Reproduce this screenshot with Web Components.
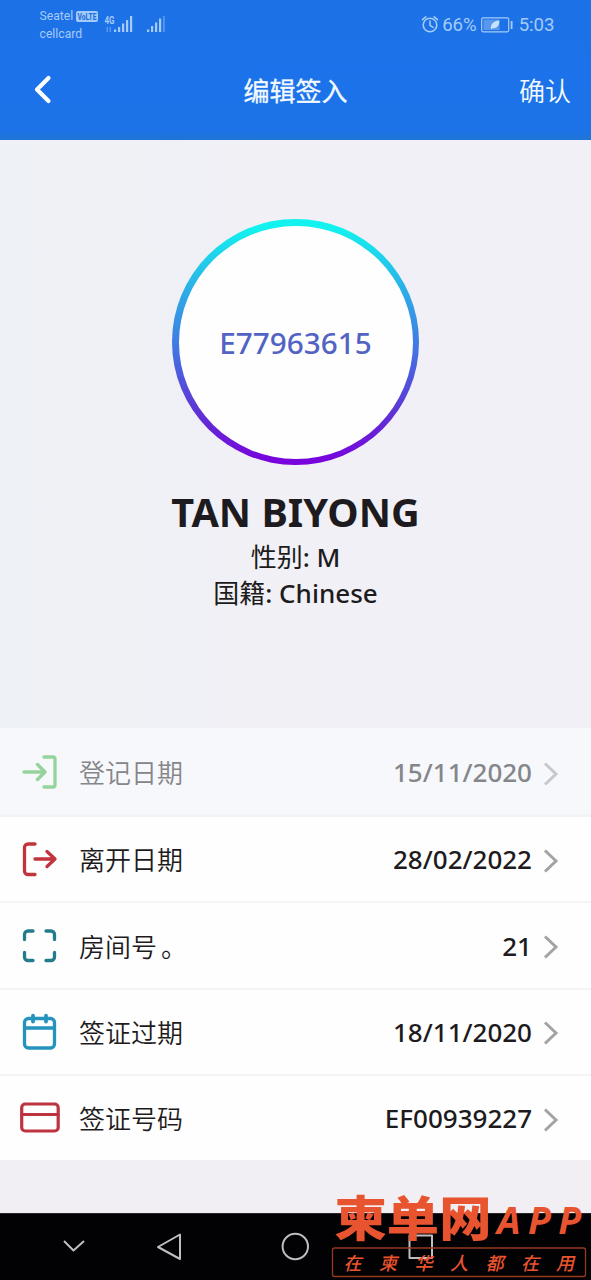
<!DOCTYPE html>
<html lang="zh-CN">
<head>
<meta charset="utf-8">
<title>编辑签入</title>
<style>
html,body{margin:0;padding:0}
body{width:591px;height:1280px;overflow:hidden;font-family:"Noto Sans","Noto Sans CJK SC",sans-serif;color:#1d1b20}
</style>
</head>
<body>
<checkin-screen></checkin-screen>
<script>
function define(name, html, setup) {
  const t = document.createElement('template');
  t.innerHTML = html;
  customElements.define(name, class extends HTMLElement {
    constructor() {
      super();
      this.attachShadow({mode: 'open'}).appendChild(t.content.cloneNode(true));
    }
    connectedCallback() { if (setup) setup(this, this.shadowRoot); }
  });
}

define('status-bar', `
<style>
:host{display:flex;height:48px;box-sizing:border-box;padding:0 36.5px 0 39.5px;justify-content:space-between;color:#a4cbf7;font-family:Roboto,sans-serif}
.left{display:flex;padding-top:7px}
.carriers{font-size:12.2px;line-height:18px;width:64px}
.first{display:flex;align-items:center;gap:3px;height:18px}
.volte{display:block;flex:none;overflow:visible}
svg{display:block}
.right{display:flex;height:24px;margin-top:13px;align-items:center;font-size:18.6px;line-height:24px}
</style>
<div class="left">
  <div class="carriers"><div class="first"><span>Seatel</span><svg class="volte" width="23" height="17" viewBox="0 -3 23 17"><rect width="22" height="11" rx="2" fill="#a4cbf7"/><text x="1.500" y="8.700" font-size="9" font-weight="800" fill="#1f6fe0" textLength="19" lengthAdjust="spacingAndGlyphs">VoLTE</text></svg></div><div>cellcard</div></div>
  <svg width="62" height="28" viewBox="103 7 62 28"><g fill="#a4cbf7">
    <text x="103.5" y="24" font-family="Roboto" font-size="11.5" font-weight="700" textLength="10" lengthAdjust="spacingAndGlyphs">4G</text>
    <rect x="113" y="29.5" width="2.2" height="2.5"/><rect x="117" y="27" width="2.2" height="5"/><rect x="121" y="23.5" width="2.2" height="8.5"/><rect x="125" y="20" width="2.2" height="12"/><rect x="129" y="16" width="2.2" height="16"/>
    <rect x="146" y="29.5" width="2.2" height="2.5"/><rect x="150" y="26" width="2.2" height="6"/><rect x="154" y="22.5" width="2.2" height="9.5"/><rect x="158" y="18.5" width="2.2" height="13.5"/></g>
    <g fill="#5797ee"><rect x="105.5" y="27" width="1.5" height="5"/><rect x="108.5" y="27" width="1.5" height="5"/><rect x="162" y="16" width="1.8" height="16"/></g>
  </svg>
</div>
<div class="right">
  <svg width="20" height="20" viewBox="0 0 20 20" fill="none" stroke="#a4cbf7" stroke-width="1.6" stroke-linecap="round"><circle cx="9" cy="10" r="6.8"/><path d="M9 6V10.300L12 12.300M1.500 4.700L4.800 1.800M16.500 4.700L13.200 1.800"/></svg>
  <span style="width:39px;padding-left:1px">66%</span>
  <svg width="32" height="16" viewBox="0 0 32 16"><rect x=".7" y=".8" width="27" height="14" rx="1.5" fill="none" stroke="#a4cbf7" stroke-width="1.2"/><rect x="2.5" y="2.6" width="16" height="10.4" fill="#5797ee"/><path d="M10 12.2C9 7.5 12.5 4 18.3 3.6C18.6 8.8 15.5 12 11.5 11.2Z" fill="#c6e2fb"/><rect x="29.7" y="4" width="1.8" height="8" fill="#a4cbf7"/></svg>
  <span style="margin-left:5.5px">5:03</span>
</div>`);

define('nav-header', `
<style>
:host{display:block;height:140px;background:linear-gradient(#1d71e6,#1c72ea 50%,#1c72e6 94%,#2075d5)}
.nav{display:grid;grid-template-columns:90px 1fr 90px;height:84px;align-items:center;color:#f3faff;font-size:26px;line-height:36px}
.nav>*{display:block}
.title{text-align:center;font-weight:400;-webkit-text-stroke:.3px #f3faff;padding-top:2px}
.ok{text-align:right;padding:2px 20px 0 0;font-weight:350;white-space:nowrap}
</style>
<status-bar></status-bar>
<div class="nav">
  <svg width="60" height="40" viewBox="0 0 60 40" fill="none" stroke="#fff" stroke-width="4.200" stroke-linecap="round" stroke-linejoin="round"><path d="M48.5 8L37 19.5L48.5 31"/></svg>
  <span class="title"><slot></slot></span><span class="ok"><slot name="action"></slot></span>
</div>`);

define('profile-card', `
<style>
:host{display:flex;flex-direction:column;align-items:center;height:588px;box-sizing:border-box;padding-top:79px;background:linear-gradient(90deg,#eef1f5,#f1f0f6 60%,#f1f0f6)}
.ring{width:247px;height:246px;border-radius:50%;box-sizing:border-box;padding:6.5px;background:linear-gradient(#12f3ef 3%,#2fa6e6 32%,#3f7ee2 50%,#5055dc 65%,#6030d4 80%,#7a00dd)}
.disc{height:100%;border-radius:50%;background:#fefeff;display:flex;align-items:center;justify-content:center;color:#5263c3;font-size:29.7px;font-weight:500;padding-top:1px;box-sizing:border-box}
h1{margin:20px 0 0;font-size:39.7px;line-height:54px;font-weight:700;white-space:nowrap}
.line{font-size:26px;line-height:36px;font-weight:500;white-space:nowrap;text-align:center}
</style>
<div class="ring"><div class="disc"><slot name="id"></slot></div></div>
<h1><slot name="name"></slot></h1>
<div class="line"><slot></slot></div>`);

define('profile-fact', `
<style>
:host{display:block}
.key{font-weight:400}
</style>
<span class="key"><slot name="key"></slot></span><slot></slot>`);

const icons = {
  enter: '<g stroke="#96d39c"><path d="M24 5H33a2 2 0 0 1 2 2V33a2 2 0 0 1-2 2H24M4 20H25M17.500 12.500L25 20L17.500 27.500"/></g>',
  leave: '<g stroke="#c1343b"><path d="M15 5H8a3.500 3.500 0 0 0-3.500 3.500V32a3.500 3.500 0 0 0 3.500 3.500H15M15 20H35M27 12.500L35 20L27 27.500"/></g>',
  room: '<g stroke="#237b8b"><path d="M4.500 13.500V8.500a3.500 3.500 0 0 1 3.500-3.500H13M26 5H31a3.500 3.500 0 0 1 3.500 3.500V13.500M34.500 26.500V31a3.500 3.500 0 0 1-3.500 3.500H26M13 34.500H8a3.500 3.500 0 0 1-3.500-3.500V26.500"/></g>',
  date: '<g stroke="#2493bd"><rect x="4.500" y="6.500" width="30" height="29.500" rx="4"/><path d="M4.500 16H34.500"/><path d="M13 3.700V9.500M26 3.700V9.500" stroke-width="3.800"/></g>',
  card: '<g stroke="#bd333e" stroke-width="3.200"><rect x="1.700" y="6" width="36.500" height="27" rx="3.500"/><path d="M2 16.500H38"/></g>'
};
define('detail-row', `
<style>
:host{display:flex;align-items:center;height:86.4px;box-sizing:border-box;padding:0 32px 0 19.5px;background:#fefefe;border-bottom:2px solid #f4f4f5;font-size:26px;line-height:36px}
:host([muted]){background:#f6f8fb;height:89px;padding-top:2px;border-bottom:3px solid #f1f3f5;color:#85868a}
:host([last]){border-bottom:0;height:84px}
.icon{width:40px;height:40px;fill:none;stroke-width:3.3;stroke-linecap:round;stroke-linejoin:round}
.label{margin:2px 0 0 19.5px;font-weight:350;flex:1}
.value{font-weight:500;white-space:nowrap}
.chev{width:16px;height:26px;margin:3px 0 0 11px;fill:none;stroke:#a3a2a4;stroke-width:3}
:host([muted]) .chev{stroke:#c6c8cb}
</style>
<svg class="icon" viewBox="0 0 40 40"></svg>
<span class="label"><slot></slot></span>
<span class="value"><slot name="value"></slot></span>
<svg class="chev" viewBox="0 0 16 26"><path d="M2 2.500L13 13L2 23.500"/></svg>`,
(el, root) => { root.querySelector('.icon').innerHTML = icons[el.getAttribute('icon')]; });

define('system-nav', `
<style>
:host{display:block;height:67px;background:#020103;border-top:1px solid #26252a;box-sizing:border-box}
svg{display:block}
</style>
<svg width="591" height="66" viewBox="0 1214 591 66" fill="none" stroke="#bfbfc0" stroke-width="2" stroke-linejoin="round">
<path d="M64 1241L73.500 1250.500L84 1241M180 1234.500V1259L158 1247Z"/><circle cx="295.300" cy="1246.500" r="12.700"/><rect x="409.500" y="1235.500" width="22.500" height="22.500"/></svg>`);

define('brand-mark', `
<style>
:host{position:absolute;left:328px;top:1188px;width:263px;height:92px;color:#e8542f;font-family:"Noto Sans CJK SC",sans-serif}
svg{display:block;overflow:visible}
</style>
<svg width="263" height="92" viewBox="328 1188 263 92" fill="#e8542f">
<g font-family="Noto Sans CJK SC" font-weight="900">
<text x="334.500" y="1236" font-size="48" textLength="157" lengthAdjust="spacingAndGlyphs">柬单网</text></g>
<text x="497" y="1234" font-family="Open Sans" font-weight="700" font-style="italic" font-size="37.500" textLength="84">APP</text>
<rect x="332.500" y="1248" width="253" height="28.500" rx="2" fill="none" stroke="#96391f" stroke-width="1.300"/>
<g font-family="Noto Sans CJK SC" font-weight="500" font-style="italic" font-size="18"><text x="343.500 379 414.500 450 485.500 521 556" y="1269.500">在柬华人都在用</text></g>
</svg>`);

define('checkin-screen', `
<style>
:host{display:flex;flex-direction:column;width:591px;height:1280px;background:#f1eff3;position:relative}
main{flex:1}
.stop{margin-left:4px}
</style>
<nav-header>编辑签入<span slot="action">确认</span></nav-header>
<main>
<profile-card><span slot="id">E77963615</span><span slot="name">TAN BIYONG</span><profile-fact><span slot="key">性别</span>: M</profile-fact><profile-fact><span slot="key">国籍</span>: Chinese</profile-fact></profile-card>
<detail-row icon="enter" muted>登记日期<span slot="value">15/11/2020</span></detail-row>
<detail-row icon="leave">离开日期<span slot="value">28/02/2022</span></detail-row>
<detail-row icon="room">房间号<span class="stop">。</span><span slot="value">21</span></detail-row>
<detail-row icon="date">签证过期<span slot="value">18/11/2020</span></detail-row>
<detail-row icon="card" last>签证号码<span slot="value">EF00939227</span></detail-row>
</main>
<system-nav></system-nav>
<brand-mark></brand-mark>`);
</script>
</body>
</html>
